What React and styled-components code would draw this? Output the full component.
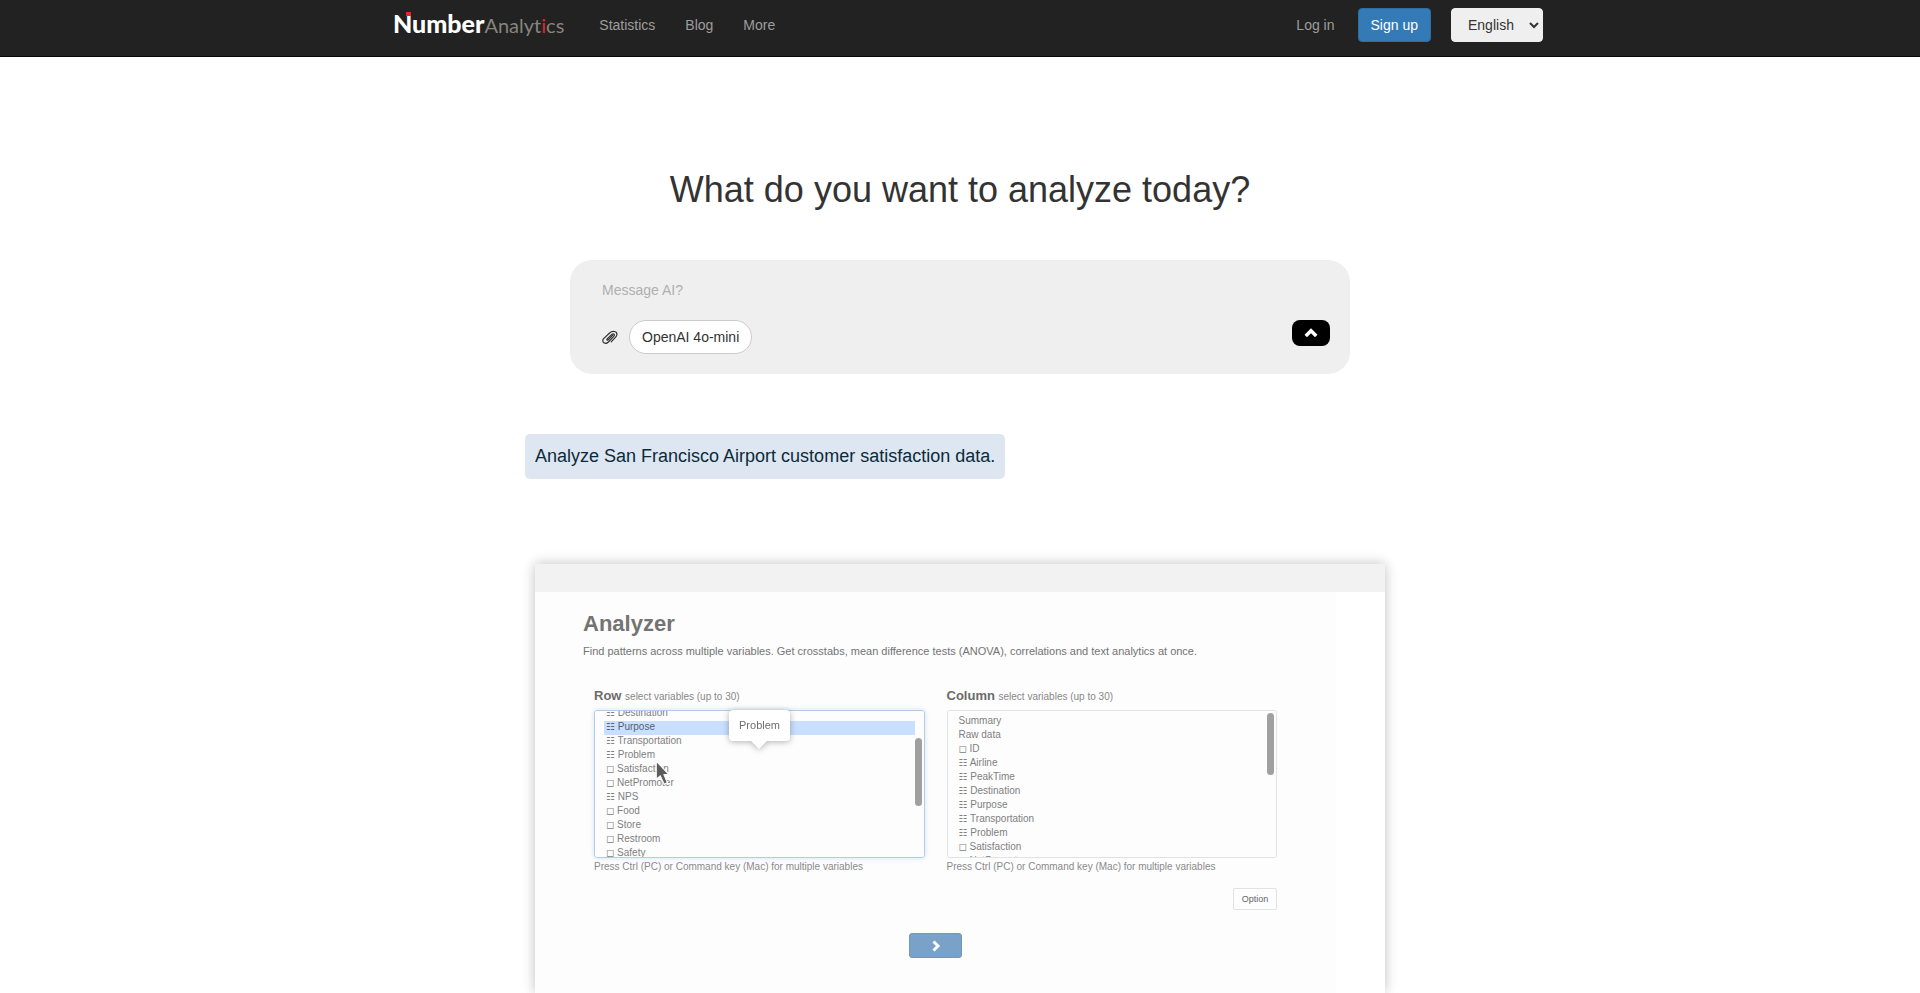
import React, { useEffect, useRef, useState } from 'react'
import styled, { createGlobalStyle } from 'styled-components';

const GlobalStyle = createGlobalStyle`
* {
    box-sizing: border-box;
}

body {
    margin: 0;
    background-color: #FFFFFF;
    color: #333333;
    font-family: "Liberation Sans", Arial, sans-serif;
    font-size: 14px;
    line-height: 20px;
}

button, input, select {
    font-family: inherit;
}
`;

const Page = styled.div`
display: flex;
flex-direction: column;
min-height: 100vh;
`;

const Navbar = styled.nav`
background-color: #222222;
border-bottom: 1px solid #080808;
`;

const NavContainer = styled.div`
display: flex;
align-items: flex-start;
width: 100%;
max-width: 1170px;
height: 56px;
margin: 0 auto;
padding: 0 2px 0 18px;
`;

const Brand = styled.a`
position: relative;
margin-right: 20px;
padding-top: 8px;
color: #FFFFFF;
font-family: Lato, sans-serif;
font-size: 25px;
font-weight: 900;
line-height: 30px;
text-decoration: none;

::before{
    content: "";
    position: absolute;
    top: 12px;
    left: 13px;
    width: 5px;
    height: 4px;
    background-color: #e0262f;
}
`;

const BrandLight = styled.span`
color: #85857e;
font-size: 20px;
font-weight: 400;
`;

const BrandAccent = styled.span`
color: #e0262f;
`;

const NavLink = styled.a`
padding: 15px;
color: #9d9d9d;
text-decoration: none;

&:hover{
    color: #FFFFFF;
}
`;

const NavRight = styled.div`
display: flex;
align-items: flex-start;
margin-left: auto;
`;

const SignUpButton = styled.button`
height: 34px;
margin: 8px 20px 0 8px;
padding: 0 12px;
border: 1px solid #2e6da4;
border-radius: 4px;
background-color: #337ab7;
color: #FFFFFF;
font-size: 14px;
cursor: pointer;
`;

const LanguageSelect = styled.select`
width: 92px;
height: 34px;
margin-top: 8px;
padding: 0 0 0 12px;
border: 1px solid #efefef;
border-radius: 4px;
background-color: #efefef;
color: #333333;
font-size: 14px;
`;

const Title = styled.h1`
margin: 113px 0 50px;
font-size: 36px;
font-weight: 400;
line-height: 40px;
text-align: center;
`;

const PromptBox = styled.form`
width: 100%;
max-width: 780px;
margin: 0 auto 60px;
padding: 20px 20px 20px 32px;
border-radius: 22px;
background-color: #efefef;
`;

const PromptInput = styled.input`
display: block;
width: 100%;
height: 20px;
padding: 0;
border: 0;
outline: 0;
background-color: transparent;
font-size: 14px;

&::placeholder{
    color: #b0b0b0;
}
`;

const PromptActions = styled.div`
display: flex;
align-items: flex-start;
margin-top: 20px;
`;

const AttachButton = styled.button`
display: flex;
align-items: center;
height: 34px;
margin-right: 11px;
padding: 0;
border: 0;
background-color: transparent;
color: #333333;
cursor: pointer;
`;

const ModelButton = styled.button`
height: 34px;
padding: 0 12px;
border: 1px solid #cccccc;
border-radius: 17px;
background-color: #FFFFFF;
color: #333333;
font-size: 14px;
cursor: pointer;
`;

const SendButton = styled.button`
display: flex;
align-items: center;
justify-content: center;
width: 38px;
height: 26px;
margin-left: auto;
padding: 0;
border: 0;
border-radius: 8px;
background-color: #000000;
color: #FFFFFF;
cursor: pointer;
`;

const Showcase = styled.section`
display: flex;
flex: 1;
flex-direction: column;
align-items: flex-start;
width: 100%;
max-width: 870px;
margin: 0 auto;
`;

const Example = styled.p`
margin: 0 0 85px;
padding: 10px;
border-radius: 5px;
background-color: #dee6f1;
color: #0c2b3a;
font-size: 18px;
line-height: 25px;
`;

const Card = styled.div`
display: flex;
flex: 1;
flex-direction: column;
align-self: stretch;
margin: 0 10px;
background-color: #FFFFFF;
box-shadow: 0 0 12px rgba(0, 0, 0, 0.25);
`;

const CardBar = styled.div`
height: 28px;
background-color: #f2f2f2;
`;

const CardBody = styled.div`
display: flex;
flex: 1;
flex-direction: column;
margin-right: 49px;
padding: 20px 48px;
background-color: #fdfdfd;
`;

const CardTitle = styled.h2`
margin: 0;
color: #737373;
font-size: 22px;
line-height: 24px;
`;

const CardText = styled.p`
margin: 8px 0 31px;
color: #737373;
font-size: 11px;
line-height: 14px;
`;

const Fields = styled.div`
display: grid;
grid-template-columns: 1fr 1fr;
column-gap: 22px;
padding: 0 11px;
`;

const FieldLabel = styled.label`
display: block;
height: 21px;
color: #6b6b6b;
font-size: 13px;
font-weight: 700;
line-height: 14px;
`;

const Small = styled.small`
color: #888888;
font-size: 10px;
font-weight: 400;
`;

const ListWrap = styled.div`
position: relative;
`;

const List = styled.select`
display: block;
width: 100%;
height: 148px;
padding: ${props => props.$focused ? "0 9px" : "4px 9px 0"};
border: 1px solid ${props => props.$focused ? "#b4cbe6" : "#e2e2e2"};
border-radius: 3px;
outline: 0;
background-color: #fdfdfd;
box-shadow: ${props => props.$focused ? "0 0 5px #cfe3f5" : "none"};
color: #808080;
font-family: "Liberation Sans", "DejaVu Sans", sans-serif;
font-size: 10px;
scrollbar-width: none;

option{
    min-height: 14px;
    height: 14px;
    padding: 0 2px;
    line-height: 14px;
}

option:checked{
    background: linear-gradient(#c9dfff, #c9dfff);
    color: #56606e;
}
`;

const Thumb = styled.div`
position: absolute;
top: ${props => props.$top}px;
right: 3px;
width: 7px;
height: ${props => props.$size}px;
border-radius: 4px;
background-color: #a0a0a0;
`;

const Tooltip = styled.div`
position: absolute;
top: 0;
left: 135px;
width: 61px;
border-radius: 4px;
background-color: #FFFFFF;
filter: drop-shadow(0 1px 3px rgba(0, 0, 0, 0.3));
color: #6e6e6e;
font-size: 11px;
line-height: 31px;
text-align: center;

&::after{
    content: "";
    position: absolute;
    top: 31px;
    left: 22px;
    border: 8px solid transparent;
    border-top-color: #FFFFFF;
    border-bottom: 0;
}
`;

const Pointer = styled.svg`
position: absolute;
top: 50px;
left: 61px;
`;

const Hint = styled.p`
margin: 2px 0 0;
color: #8a8a8a;
font-size: 10px;
line-height: 14px;
`;

const OptionButton = styled.button`
align-self: flex-end;
width: 44px;
height: 22px;
margin: 14px 11px 23px;
padding: 0;
border: 1px solid #e2e2e2;
border-radius: 2px;
background-color: #fdfdfd;
color: #666666;
font-size: 9px;
`;

const NextButton = styled.button`
display: flex;
align-items: center;
justify-content: center;
align-self: center;
width: 53px;
height: 25px;
padding: 0;
border: 1px solid #7098bf;
border-radius: 3px;
background-color: #7aa2c9;
color: #FFFFFF;
`;

const rowVariables = [
    { name: 'Destination', category: true },
    { name: 'Purpose', category: true },
    { name: 'Transportation', category: true },
    { name: 'Problem', category: true },
    { name: 'Satisfaction' },
    { name: 'NetPromoter' },
    { name: 'NPS', category: true },
    { name: 'Food' },
    { name: 'Store' },
    { name: 'Restroom' },
    { name: 'Safety' },
];

const columnVariables = [
    { name: 'Summary', plain: true },
    { name: 'Raw data', plain: true },
    { name: 'ID' },
    { name: 'Airline', category: true },
    { name: 'PeakTime', category: true },
    { name: 'Destination', category: true },
    { name: 'Purpose', category: true },
    { name: 'Transportation', category: true },
    { name: 'Problem', category: true },
    { name: 'Satisfaction' },
    { name: 'NetPromoter' },
];

const optionText = (item) => {
    if (item.plain) return item.name;
    return `${item.category ? '☷' : '◻'} ${item.name}`;
}

const Chevron = ({ turn = 0, size = 12 }) => (
    <svg width={size} height={size} viewBox="0 0 12 12" aria-hidden="true">
        <path d="M1.5 8.5 L6 4 L10.5 8.5" transform={`rotate(${turn} 6 6)`} fill="none" stroke="currentColor" strokeWidth="3" />
    </svg>
);

const PaperclipIcon = () => (
    <svg width="16" height="16" viewBox="0 0 16 16" fill="none" stroke="currentColor" strokeWidth="1.2" strokeLinecap="round" aria-hidden="true">
        <path d="M10.8 6.2 L6.2 10.8 C5.2 11.6 4.4 10.8 5.2 9.8 L9.8 5.4 C11.6 4 13.2 5.6 11.8 7.4 L6.4 13 C3.4 15.9 -0.8 13.2 1.4 9.8 L7.6 4 C10.4 1.4 15.6 2 14.8 6 C14.6 7.2 14 7.8 13.2 8.6 L9.2 12.8" />
    </svg>
);

const VariableList = ({ id, title, items, selected, scroll, thumbTop, thumbSize, children }) => {
    const [value, setValue] = useState(selected);
    const listRef = useRef(null);

    useEffect(() => {
        listRef.current.scrollTop = scroll;
    }, [scroll]);

    const handleChange = (e) => {
        setValue(Array.from(e.target.selectedOptions, (option) => option.value));
    }

    return (
        <div>
            <FieldLabel htmlFor={id}>{title} <Small>select variables (up to 30)</Small></FieldLabel>
            <ListWrap>
                <List id={id} ref={listRef} multiple value={value} onChange={handleChange} $focused={selected.length > 0}>
                    {items.map((item) => {
                        return <option key={item.name} value={item.name}>{optionText(item)}</option>;
                    })}
                </List>
                <Thumb $top={thumbTop} $size={thumbSize} />
                {children}
            </ListWrap>
            <Hint>Press Ctrl (PC) or Command key (Mac) for multiple variables</Hint>
        </div>
    )
}

const App = () => {
    const [message, setMessage] = useState('');

    return (
        <Page>
            <GlobalStyle />
            <Navbar>
                <NavContainer>
                    <Brand href="#">Number<BrandLight>Analyt<BrandAccent>i</BrandAccent>cs</BrandLight></Brand>
                    <NavLink href="#">Statistics</NavLink>
                    <NavLink href="#">Blog</NavLink>
                    <NavLink href="#">More</NavLink>
                    <NavRight>
                        <NavLink href="#">Log in</NavLink>
                        <SignUpButton>Sign up</SignUpButton>
                        <LanguageSelect aria-label="Language">
                            <option>English</option>
                        </LanguageSelect>
                    </NavRight>
                </NavContainer>
            </Navbar>
            <Title>What do you want to analyze today?</Title>
            <PromptBox onSubmit={(e) => e.preventDefault()}>
                <PromptInput aria-label="Message" placeholder="Message AI?" value={message} onChange={(e) => setMessage(e.target.value)} />
                <PromptActions>
                    <AttachButton type="button" aria-label="Attach a file"><PaperclipIcon /></AttachButton>
                    <ModelButton type="button">OpenAI 4o-mini</ModelButton>
                    <SendButton aria-label="Send"><Chevron size={14} /></SendButton>
                </PromptActions>
            </PromptBox>
            <Showcase>
                <Example>Analyze San Francisco Airport customer satisfaction data.</Example>
                <Card>
                    <CardBar />
                    <CardBody>
                        <CardTitle>Analyzer</CardTitle>
                        <CardText>Find patterns across multiple variables. Get crosstabs, mean difference tests (ANOVA), correlations and text analytics at once.</CardText>
                        <Fields>
                            <VariableList id="row" title="Row" items={rowVariables} selected={['Purpose']} scroll={4} thumbTop={28} thumbSize={68}>
                                <Tooltip>Problem</Tooltip>
                                <Pointer width="15" height="26" viewBox="0 0 13 23" aria-hidden="true">
                                    <path d="M1 1 L1 17 L4.5 14 L8 21.5 L10.8 20 L7.8 13 L12 12.6 Z" fill="#5c5c5c" stroke="#fdfdfd" />
                                </Pointer>
                            </VariableList>
                            <VariableList id="column" title="Column" items={columnVariables} selected={[]} scroll={0} thumbTop={3} thumbSize={62} />
                        </Fields>
                        <OptionButton>Option</OptionButton>
                        <NextButton aria-label="Next"><Chevron turn={90} /></NextButton>
                    </CardBody>
                </Card>
            </Showcase>
        </Page>
    )
}

export default App
